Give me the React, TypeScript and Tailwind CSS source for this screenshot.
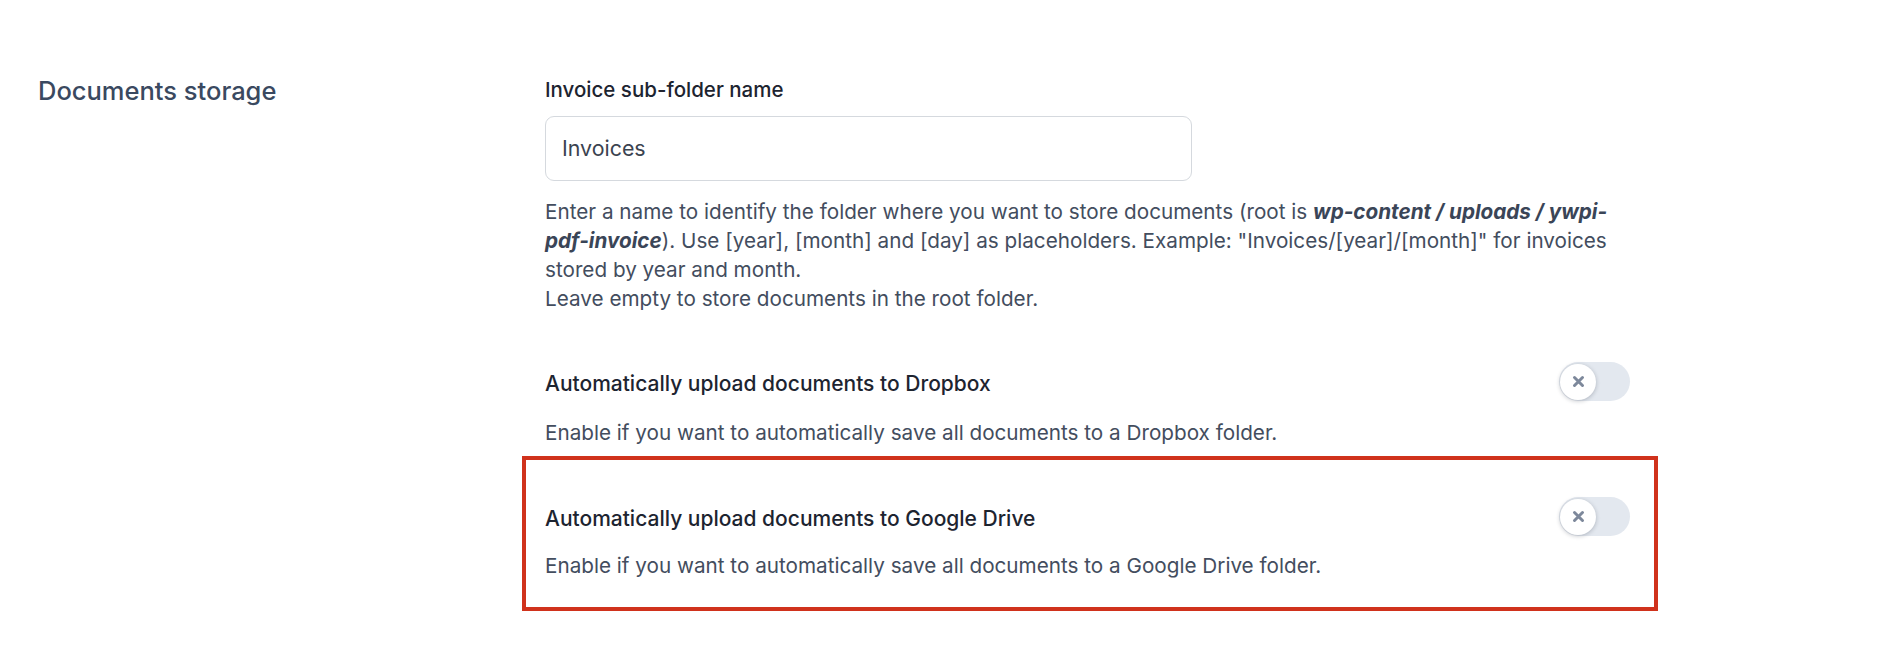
import React from "react";

const XIcon = () => (
  <svg width="13" height="13" viewBox="0 0 13 13" fill="none">
    <path d="M2.5 2.5l8 8M10.5 2.5l-8 8" stroke="#7d889b" strokeWidth="3" strokeLinecap="round" />
  </svg>
);

const Toggle = () => (
  <div className="flex h-[39px] w-[71px] shrink-0 items-center rounded-full bg-[#e3e8ef]">
    <div className="ml-[1px] flex size-[36px] items-center justify-center rounded-full bg-white shadow-[0_1px_4px_rgba(15,23,42,0.25)]">
      <XIcon />
    </div>
  </div>
);

type OptionProps = {
  title: string;
  desc: string;
  descGap: string;
};

const Option = ({ title, desc, descGap }: OptionProps) => (
  <div>
    <div className="flex items-center justify-between">
      <span className="pt-[4px] text-[21px] leading-[28px] font-medium text-[#1d2430]">{title}</span>
      <Toggle />
    </div>
    <p className={`${descGap} text-[20.7px] leading-[29px] text-[#434d5e]`}>{desc}</p>
  </div>
);

export default function App() {
  return (
    <div className="min-h-[672px] bg-white pt-[75px] pl-[38px] font-['Inter','Liberation_Sans',sans-serif] antialiased">
      <div className="flex">
        <div className="w-[507px] shrink-0">
          <h2 className="text-[25.5px] leading-[32px] font-medium text-[#3a4960]">Documents storage</h2>
        </div>

        <div className="w-[1085px]">
          <label className="block pt-[1px] text-[20.5px] leading-[28px] font-medium text-[#1d2430]">
            Invoice sub-folder name
          </label>
          <div className="mt-[12px] flex h-[65px] w-[647px] items-center rounded-[9px] border border-[#d5d9de] pl-[16px] text-[21.4px] text-[#3b4350]">
            Invoices
          </div>
          <p className="mt-[16px] text-[20.7px] leading-[29px] text-[#434d5e]">
            Enter a name to identify the folder where you want to store documents (root is{" "}
            <b className="font-bold italic text-[#3a4557]">wp-content / uploads / ywpi-pdf-invoice</b>). Use [year],
            [month] and [day] as placeholders. Example: "Invoices/[year]/[month]" for invoices stored by year and
            month.
            <br />
            Leave empty to store documents in the root folder.
          </p>

          <div className="mt-[49px]">
            <Option
              title="Automatically upload documents to Dropbox"
              desc="Enable if you want to automatically save all documents to a Dropbox folder."
              descGap="mt-[17px]"
            />
          </div>

          <div className="mt-[9px] -ml-[23px] -mr-[28px] border-[4px] border-[#d0321c] pt-[37px] pb-[27px] pl-[19px] pr-[24px]">
            <Option
              title="Automatically upload documents to Google Drive"
              desc="Enable if you want to automatically save all documents to a Google Drive folder."
              descGap="mt-[15px]"
            />
          </div>
        </div>
      </div>
    </div>
  );
}
